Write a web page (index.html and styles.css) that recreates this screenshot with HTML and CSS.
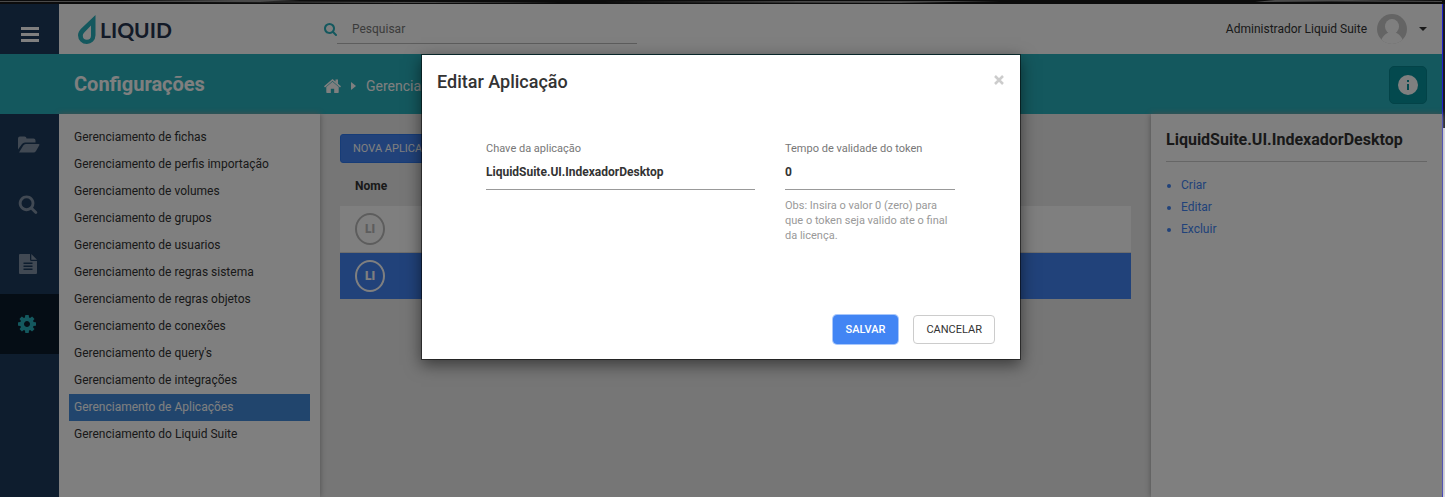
FILE: index.html
```html
<!DOCTYPE html>
<html lang="pt-BR">
<head>
<meta charset="utf-8">
<title>Liquid Suite - Configurações</title>
<link rel="stylesheet" href="styles.css">
</head>
<body>
<svg class="sprite" aria-hidden="true">
  <symbol id="search" viewBox="0 0 1664 1792"><path d="M1152 832q0-185-131.500-316.500t-316.500-131.500-316.500 131.500-131.500 316.500 131.500 316.500 316.500 131.500 316.500-131.500 131.500-316.500zm512 832q0 52-38 90t-90 38q-54 0-90-38l-343-342q-179 124-399 124-143 0-273.500-55.500t-225-150-150-225-55.500-273.500 55.500-273.500 150-225 225-150 273.500-55.500 273.500 55.500 225 150 150 225 55.500 273.500q0 220-124 399l343 343q37 37 37 90z"/></symbol>
</svg>
<div class="screen">
  <svg class="strip" viewBox="0 0 1445 4" preserveAspectRatio="none"><rect width="1445" height="4" fill="#0c0c0c"/><path d="M0 1H120L235 0H300L260 1.500L430 2L560 3H400L180 2H0ZM600 2L800 1H1000L900 3ZM1255 2L1275 0H1350L1442 1V2L1330 1.500Z" fill="#4a4a4a"/></svg>
  <div class="desktop">
    <div class="app">
      <header class="topbar">
        <button class="menu" aria-label="Menu"><span></span><span></span><span></span></button>
        <div class="brand">
          <svg class="drop" viewBox="0 0 18 29"><path fill="#28b0bc" fill-rule="evenodd" d="M17.500 0V20.300A8.700 8.700 0 0 1 8.700 29A8.700 8.700 0 0 1 0 20.300C0 17.500 1.300 15.500 3 13.700ZM13 10.500L6.500 17.300C5.300 18.700 4.800 19.600 4.800 20.800A4.100 4.100 0 0 0 8.900 24.800A4.100 4.100 0 0 0 13 20.800Z"/></svg>
          <span>LIQUID</span>
        </div>
        <label class="search"><svg><use href="#search"/></svg><input type="text" placeholder="Pesquisar" aria-label="Pesquisar"></label>
        <div class="user">
          <span>Administrador Liquid Suite</span>
          <svg class="avatar" viewBox="0 0 30 30"><defs><clipPath id="c"><circle cx="15" cy="15" r="15"/></clipPath></defs><g clip-path="url(#c)"><rect width="30" height="30" fill="#c9c9c9"/><ellipse cx="15" cy="12.500" rx="7" ry="7.500" fill="#fff"/><path fill="#fff" d="M3 30C5 22 8 20.500 12 18H18C22 20.500 25 22 27 30Z"/></g></svg>
          <i class="caret"></i>
        </div>
      </header>
      <div class="titlebar">
        <h1>Configurações</h1>
        <nav class="crumbs">
          <svg class="home" viewBox="0 0 17 14"><path d="M8.500 0L11.500 2.600V.6H14V4.700L17 7.300L16 8.400L8.500 2L1 8.400L0 7.300ZM8.500 2.700L14.700 8V13.200Q14.700 14 14 14H10.200V9.800H6.800V14H3Q2.300 14 2.300 13.200V8Z"/></svg>
          <i class="arrow"></i>
          <span>Gerenciamento de Aplicações</span>
        </nav>
        <button class="info" aria-label="Informações"><svg viewBox="0 0 20 20"><circle cx="10" cy="10" r="10" fill="#fff"/><path fill="#06939d" d="M9 5h2v2H9zM9 9h2v6H9z"/></svg></button>
      </div>
      <div class="body">
        <nav class="rail">
          <a href="#" aria-label="Arquivos"><svg class="folder" viewBox="0 0 22 17"><path d="M0 13.500V2.500A2 2 0 0 1 2 .5H6.500A2 2 0 0 1 8.500 2.500H15.500A2 2 0 0 1 17.500 4.500V6.500H7A4 4 0 0 0 4 8ZM1 16.500L5.300 9.500A3 3 0 0 1 7.800 8H20.500Q22 8 21.300 9.300L18 15Q17 16.500 15.500 16.500Z"/></svg></a>
          <a href="#" aria-label="Pesquisa"><svg><use href="#search"/></svg></a>
          <a href="#" aria-label="Documentos"><svg viewBox="0 0 18 20"><path fill-rule="evenodd" d="M1 0H11V5.500Q11 7 12.500 7H18V19Q18 20 17 20H1Q0 20 0 19V1Q0 0 1 0ZM12.300 0L18 5.800H12.300ZM4.500 8.500V10H13.500V8.500ZM4.500 11.500V13H13.500V11.500ZM4.500 14.500V16H13.500V14.500Z"/></svg></a>
          <a href="#" class="on" aria-label="Configurações"><svg viewBox="0 0 1536 1536"><path fill-rule="evenodd" d="M1024 768q0-106-75-181t-181-75-181 75-75 181 75 181 181 75 181-75 75-181zm512-109v222q0 12-8 23t-20 13l-185 28q-19 54-39 91 35 50 107 138 10 12 10 25t-9 23q-27 37-99 108t-94 71q-12 0-26-9l-138-108q-44 23-91 38-16 136-29 186-7 28-36 28H657q-14 0-24.500-8.500T621 1506l-28-184q-49-16-90-37l-141 107q-10 9-25 9-14 0-25-11-126-114-165-168-7-10-7-23 0-12 8-23 15-21 51-66.500t54-70.500q-27-50-41-99L29 913q-13-2-21-12.500T0 877V655q0-12 8-23t19-13l186-28q14-46 39-92-40-57-107-138-10-12-10-24 0-10 9-23 26-36 98.500-107.500T337 135q13 0 26 10l138 107q44-23 91-38 16-136 29-186 7-28 36-28h222q14 0 24.500 8.500T915 30l28 184q49 16 90 37l142-107q9-9 24-9 13 0 25 10 129 119 165 170 7 8 7 22 0 12-8 23-15 21-51 66.500t-54 70.500q26 50 41 98l183 28q13 2 21 12.500t8 23.500z"/></svg></a>
        </nav>
        <nav class="list">
          <a href="#">Gerenciamento de fichas</a>
          <a href="#">Gerenciamento de perfis importação</a>
          <a href="#">Gerenciamento de volumes</a>
          <a href="#">Gerenciamento de grupos</a>
          <a href="#">Gerenciamento de usuarios</a>
          <a href="#">Gerenciamento de regras sistema</a>
          <a href="#">Gerenciamento de regras objetos</a>
          <a href="#">Gerenciamento de conexões</a>
          <a href="#">Gerenciamento de query's</a>
          <a href="#">Gerenciamento de integrações</a>
          <a href="#" class="on">Gerenciamento de Aplicações</a>
          <a href="#">Gerenciamento do Liquid Suite</a>
        </nav>
        <main class="content">
          <button class="new">NOVA APLICAÇÃO</button>
          <table>
            <thead><tr><th>Nome</th></tr></thead>
            <tbody>
              <tr><td><span class="badge">LI</span></td></tr>
              <tr class="on"><td><span class="badge">LI</span></td></tr>
            </tbody>
          </table>
        </main>
        <aside class="details">
          <h2>LiquidSuite.UI.IndexadorDesktop</h2>
          <ul>
            <li><a href="#">Criar</a></li>
            <li><a href="#">Editar</a></li>
            <li><a href="#">Excluir</a></li>
          </ul>
        </aside>
      </div>
      <div class="backdrop">
        <form class="modal" role="dialog" aria-labelledby="title">
          <div class="modal-head">
            <h3 id="title">Editar Aplicação</h3>
            <button type="button" class="close" aria-label="Fechar"><svg viewBox="0 0 10 10"><path d="M1 1L9 9M9 1L1 9" stroke="#ccc" stroke-width="2.500"/></svg></button>
          </div>
          <div class="fields">
            <div class="field key">
              <label for="key">Chave da aplicação</label>
              <input id="key" type="text" value="LiquidSuite.UI.IndexadorDesktop">
            </div>
            <div class="field time">
              <label for="time">Tempo de validade do token</label>
              <input id="time" type="text" value="0">
              <p>Obs: Insira o valor 0 (zero) para que o token seja valido ate o final da licença.</p>
            </div>
          </div>
          <div class="actions">
            <button type="button" class="save">SALVAR</button>
            <button type="button" class="cancel">CANCELAR</button>
          </div>
        </form>
      </div>
    </div>
    <div class="edge"></div>
  </div>
</div>
</body>
</html>
```
FILE: styles.css
```css
* { box-sizing: border-box; }
body { margin: 0; font-family: Roboto, "Liberation Sans", sans-serif; font-size: 12px; color: #333; }
a { text-decoration: none; color: inherit; }
button, input { font: inherit; margin: 0; }
h1, h2, h3, p, ul { margin: 0; padding: 0; }
svg { display: block; flex: none; fill: currentColor; }
.sprite { position: absolute; width: 0; height: 0; }
.screen { display: flex; flex-direction: column; min-height: 100vh; }
.strip { width: 100%; height: 4px; }
.desktop { flex: 1; display: flex; }
.app { flex: 1; position: relative; display: flex; flex-direction: column; }
.edge { width: 3px; border-left: 1px solid #2020c8; background: linear-gradient(#1b1b1f 124px, #e4e4ea 124px); }

.topbar { display: flex; height: 50px; background: #fff; }
.menu { width: 59px; border: 0; background: #1d3a5c; padding: 10px 0 0; display: flex; flex-direction: column; gap: 3px; align-items: center; justify-content: center; }
.menu span { width: 18px; height: 3px; background: #fff; }
.brand { width: 265px; padding: 0 0 0 19px; display: flex; align-items: center; gap: 4px; font: 700 21px Lato, sans-serif; color: #26344f; }
.drop { width: 18px; height: 29px; }
.search { display: flex; align-items: center; width: 313px; color: #28b0bc; }
.search svg { width: 13px; height: 14px; }
.search input { flex: 1; min-width: 0; height: 30px; border: 0; border-bottom: 1px solid #bbb; background: none; padding: 0 15px; }
.search input::placeholder { color: #777; opacity: 1; }
.user { margin-left: auto; display: flex; align-items: center; gap: 10px; padding-right: 15px; }
.avatar { width: 30px; height: 30px; }
.caret { margin-left: 2px; border: 4px solid transparent; border-top-color: #333; border-bottom: 0; }

.titlebar { display: flex; align-items: center; height: 60px; background: #28b0bc; color: #fff; padding: 0 15px 0 74px; }
.titlebar h1 { width: 250px; font-size: 20px; font-weight: 700; }
.crumbs { display: flex; align-items: center; font-size: 14px; gap: 10px; padding-top: 3px; white-space: nowrap; }
.home { width: 17px; height: 14px; }
.arrow { border: 4px solid transparent; border-left: 5px solid #fff; border-right: 0; }
.info { margin: 2px 0 0 auto; width: 38px; height: 38px; padding: 8px; border: 1px solid #068791; border-radius: 5px; background: #06939d; }
.info svg { width: 20px; height: 20px; }

.body { flex: 1; display: flex; background: #ededed; }
.rail { position: relative; z-index: 1; width: 59px; background: #1d3a5c; }
.rail a { display: flex; align-items: center; height: 60px; padding-left: 18px; color: #8293a6; }
.rail svg { width: 20px; height: 20px; }
.rail .folder { width: 22px; height: 17px; }
.rail a.on { background: #0b1a2b; color: #28b0bc; }
.rail a.on svg { width: 18px; height: 18px; }
.list { width: 261px; padding: 10px; background: #fff; box-shadow: 0 0 6px #999; }
.list a { display: block; line-height: 27px; padding-left: 5px; }
.list a.on { background: #428bdb; color: #fff; }
.content { flex: 1; padding: 20px; }
.new { height: 29px; padding: 0 12px; border: 1px solid #2f78ee; border-radius: 3px; background: #4285f4; color: #fff; font-size: 11px; }
.content table { width: 100%; border-collapse: separate; border-spacing: 0; }
th { height: 43px; padding: 3px 15px 0; text-align: left; font-weight: 700; }
td { height: 47px; padding: 0 15px; background: #fff; border-bottom: 1px solid #ddd; }
.on td { height: 46px; background: #4285f4; border: 0; color: #fff; }
.badge { display: flex; align-items: center; justify-content: center; width: 30px; height: 32px; border: 2px solid #bbb; border-radius: 50%; font-weight: 900; color: #bbb; }
.on .badge { border-color: #fff; color: #fff; }
.details { width: 291px; padding: 15px; background: #fff; box-shadow: 0 0 6px #999; }
.details h2 { font-size: 16px; line-height: 22px; font-weight: 700; padding-bottom: 10px; border-bottom: 1px solid #ccc; }
.details ul { padding: 12px 0 0 15px; line-height: 22px; color: #4285f4; }

.backdrop { position: absolute; z-index: 2; inset: 0; background: rgba(0, 0, 0, .5); }
.modal { width: 600px; margin: 50px auto 0; border: 1px solid rgba(0, 0, 0, .5); background: #fff; background-clip: padding-box; box-shadow: 0 5px 15px rgba(0, 0, 0, .5); }
.modal-head { display: flex; justify-content: space-between; padding: 15px; }
.modal-head h3 { font-size: 18px; line-height: 24px; font-weight: 500; }
.close { width: 12px; height: 20px; padding: 0 1px; border: 0; background: none; }
.close svg { width: 10px; height: 10px; }
.fields { display: flex; gap: 30px; min-height: 160px; padding: 32px 64px 0; }
.field label { display: block; font-size: 11px; line-height: 15px; color: #777; }
.field input { display: block; width: 100%; height: 34px; border: 0; border-bottom: 1px solid #999; padding: 0 0 2px; font-weight: 700; color: #333; }
.field.key { flex: 0 0 269px; }
.field.time { flex: 0 0 170px; }
.field p { padding-top: 8px; font-size: 11px; line-height: 15px; color: #999; }
.actions { display: flex; justify-content: flex-end; gap: 15px; padding: 46px 25px 15px; }
.actions button { height: 29px; padding: 0 12px; border: 1px solid #ccc; border-radius: 4px; background: #fff; font-size: 11px; color: #333; }
.actions .save { border-color: #4285f4; background: #4285f4; color: #fff; font-weight: 500; box-shadow: 0 0 0 1px #a8c7fb; }
```
